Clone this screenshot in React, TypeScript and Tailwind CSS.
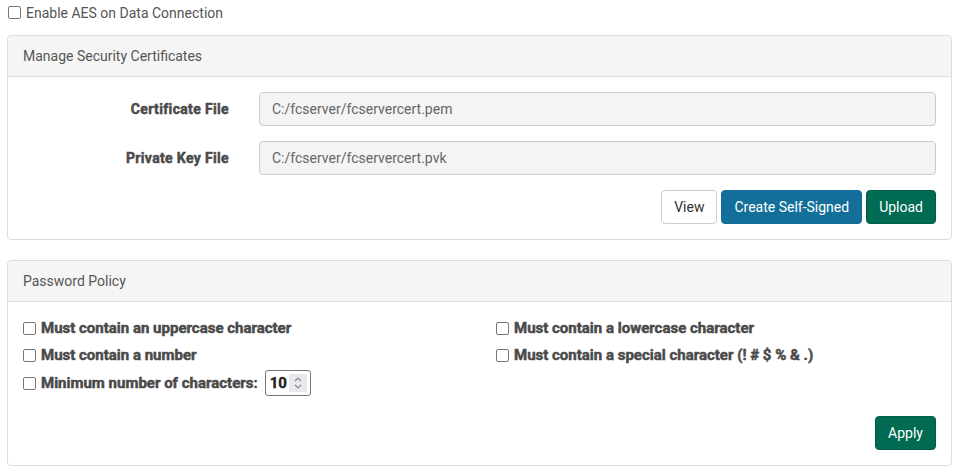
import React from 'react';

const Box: React.FC = () => (
  <span className="inline-block w-[13px] h-[13px] shrink-0 rounded-[2px] border border-[#767676] bg-white" />
);

const Check: React.FC<{ label: string; bold?: boolean }> = ({ label, bold }) => (
  <label className="flex items-center gap-[5px] h-5">
    <Box />
    <span
      className={
        bold
          ? 'text-[15px] font-bold text-[#4a4a4a] [-webkit-text-stroke:0.5px_#4a4a4a]'
          : 'text-[#555]'
      }
    >
      {label}
    </span>
  </label>
);

const Panel: React.FC<{ title: string; children: React.ReactNode }> = ({ title, children }) => (
  <div className="border border-[#ddd] rounded-[4px] bg-white">
    <div className="h-[41px] flex items-center px-[15px] bg-[#f5f5f5] border-b border-[#ddd] rounded-t-[4px] text-[#555]">
      {title}
    </div>
    <div className="p-[15px]">{children}</div>
  </div>
);

const Field: React.FC<{ label: string; value: string }> = ({ label, value }) => (
  <div className="flex items-center gap-[30px]">
    <div className="w-[206px] text-right font-bold tracking-[0.35px] text-[#4a4a4a] [-webkit-text-stroke:0.5px_#4a4a4a]">
      {label}
    </div>
    <div className="flex-1 h-[34px] flex items-center px-3 bg-[#f4f4f4] border border-[#ccc] rounded-[4px] text-[#666]">
      {value}
    </div>
  </div>
);

const App: React.FC = () => {
  return (
    <div className="w-[959px] h-[473px] bg-white px-[7px] pt-[4px] text-[14px] leading-5 font-['Roboto',sans-serif]">
      <div className="pl-px h-[17px] flex items-center">
        <Check label="Enable AES on Data Connection" />
      </div>

      <div className="mt-[14px] w-[945px]">
        <Panel title="Manage Security Certificates">
          <div className="flex flex-col gap-[15px]">
            <Field label="Certificate File" value="C:/fcserver/fcservercert.pem" />
            <Field label="Private Key File" value="C:/fcserver/fcservercert.pvk" />
            <div className="flex justify-end gap-1">
              <button className="h-[34px] px-3 border border-[#ccc] rounded-[4px] bg-white text-[#333]">View</button>
              <button className="h-[34px] px-3 border border-[#0f6a94] rounded-[4px] bg-[#136f9a] text-white">Create Self-Signed</button>
              <button className="h-[34px] px-3 border border-[#005e47] rounded-[4px] bg-[#006a52] text-white">Upload</button>
            </div>
          </div>
        </Panel>
      </div>

      <div className="mt-5 w-[945px]">
        <Panel title="Password Policy">
          <div className="flex pt-px">
            <div className="w-[473px] flex flex-col gap-[7px]">
              <Check bold label="Must contain an uppercase character" />
              <Check bold label="Must contain a number" />
              <div className="-mt-[2px] flex items-center h-[26px]">
                <Check bold label="Minimum number of characters:" />
                <div className="ml-[7px] w-[46px] h-[26px] border border-[#767676] rounded-[3px] flex items-center justify-between pl-[4px] pr-[3px]">
                  <span className="text-[15px] font-bold text-[#222] [-webkit-text-stroke:0.4px_#222]">10</span>
                  <span className="w-[18px] h-[18px] bg-[#e9e9ed] flex items-center justify-center">
                    <svg width="10" height="14" viewBox="0 0 10 14" fill="none" stroke="#8a8a8a" strokeWidth="1.2">
                      <path d="M2 5 L5 2 L8 5" />
                      <path d="M2 9 L5 12 L8 9" />
                    </svg>
                  </span>
                </div>
              </div>
            </div>
            <div className="flex-1 flex flex-col gap-[7px]">
              <Check bold label="Must contain a lowercase character" />
              <Check bold label="Must contain a special character (! # $ % & .)" />
            </div>
          </div>
          <div className="mt-[20px] flex justify-end">
            <button className="h-[34px] px-3 border border-[#005e47] rounded-[4px] bg-[#006a52] text-white">Apply</button>
          </div>
        </Panel>
      </div>
    </div>
  );
};

export default App;
